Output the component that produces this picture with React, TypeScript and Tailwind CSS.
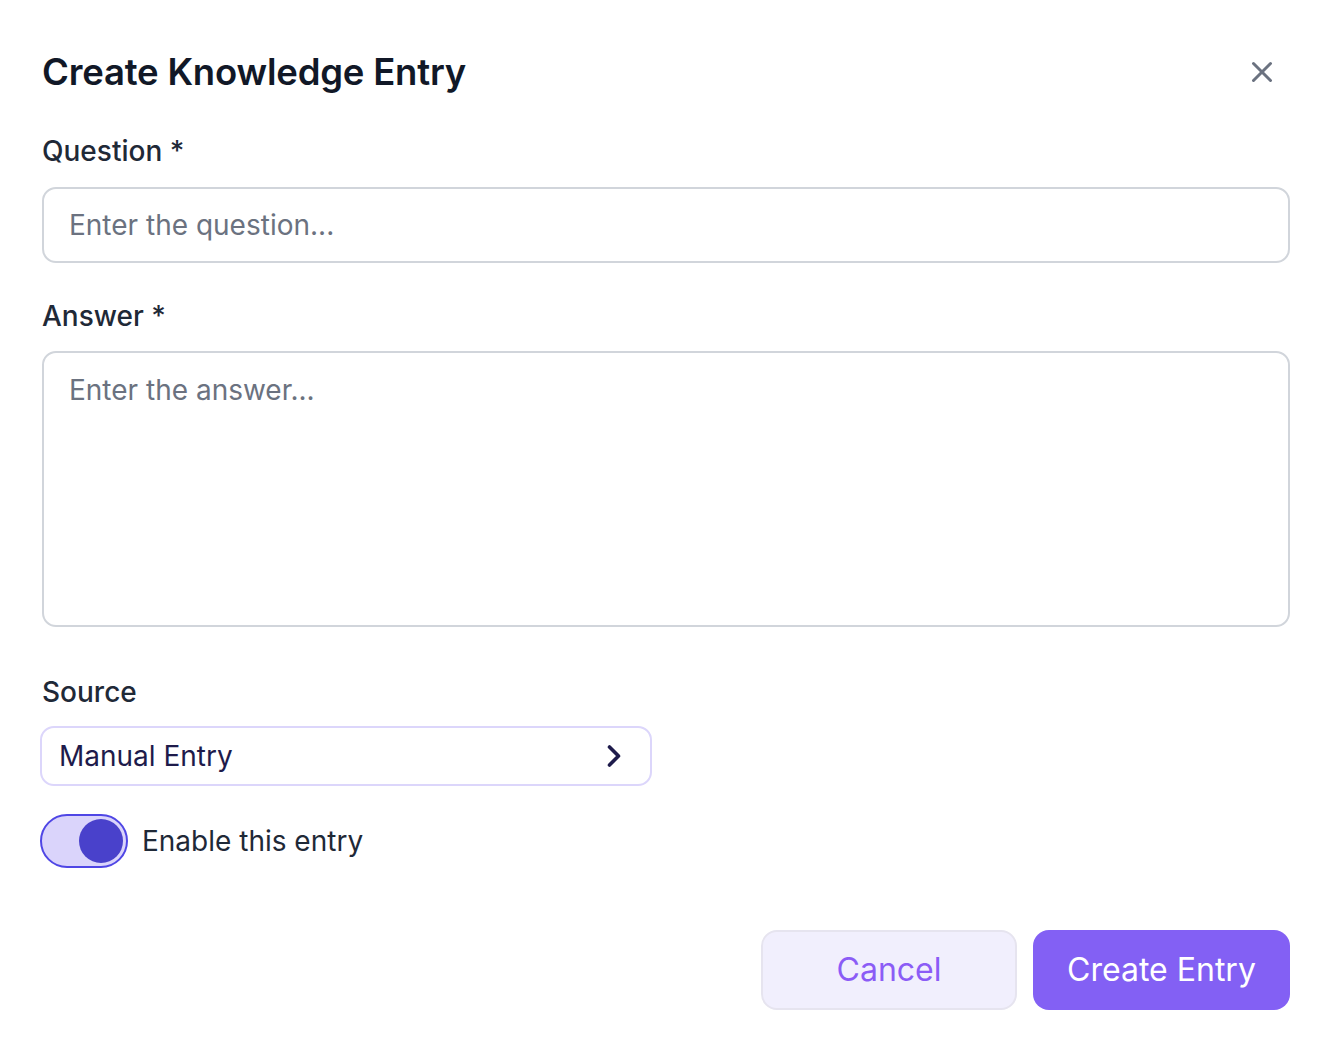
import { X, ChevronRight } from "lucide-react";

export default function App() {
  return (
    <div
      className="w-[1334px] h-[1054px] bg-white pl-[42px] pr-[44px] pt-[48px] flex flex-col text-[#1f2937]"
      style={{ fontFamily: "Inter, 'Noto Sans', sans-serif" }}
    >
      <div className="flex items-center justify-between h-[48px]">
        <h1 className="text-[36.5px] font-semibold text-[#111827] tracking-[-0.2px]">
          Create Knowledge Entry
        </h1>
        <button className="mr-[11px] text-[#6b7280]">
          <X size={34} strokeWidth={2.1} />
        </button>
      </div>

      <label className="mt-[37px] text-[28px] font-medium leading-[36px]">
        Question *
      </label>
      <input
        className="mt-[18px] h-[76px] w-full rounded-[14px] border-2 border-[#d1d5db] px-[25px] text-[28px] placeholder:text-[#6b7280] outline-none"
        placeholder="Enter the question..."
      />

      <label className="mt-[35px] text-[28px] font-medium leading-[36px]">
        Answer *
      </label>
      <textarea
        className="mt-[17px] h-[276px] w-full resize-none rounded-[14px] border-2 border-[#d1d5db] px-[25px] py-[16px] text-[28px] placeholder:text-[#6b7280] outline-none"
        placeholder="Enter the answer..."
      />

      <label className="mt-[47px] text-[28px] font-medium leading-[36px]">
        Source
      </label>
      <div className="mt-[16px] -ml-[2px] flex h-[60px] w-[612px] items-center justify-between rounded-[14px] border-2 border-[#dcd6fb] px-[17px] text-[#1e1b4b]">
        <span className="text-[28px]">Manual Entry</span>
        <ChevronRight size={36} strokeWidth={2.4} className="mr-[1px]" />
      </div>

      <div className="mt-[28px] -ml-[2px] flex items-center gap-[14px]">
        <div className="flex h-[54px] w-[88px] items-center justify-end rounded-full border-2 border-[#4f46e5] bg-[#dad4fb] pr-[3px]">
          <div className="h-[44px] w-[44px] rounded-full bg-[#4941cb]" />
        </div>
        <span className="text-[28px] text-[#1f2937]">Enable this entry</span>
      </div>

      <div className="mt-[62px] flex justify-end gap-[16px]">
        <button className="h-[80px] w-[256px] rounded-[16px] border-2 border-[#e6e4ef] bg-[#f1effd] text-[32px] text-[#8b5cf6]">
          Cancel
        </button>
        <button className="h-[80px] w-[257px] rounded-[16px] bg-[#8360f4] text-[32px] text-white">
          Create Entry
        </button>
      </div>
    </div>
  );
}
